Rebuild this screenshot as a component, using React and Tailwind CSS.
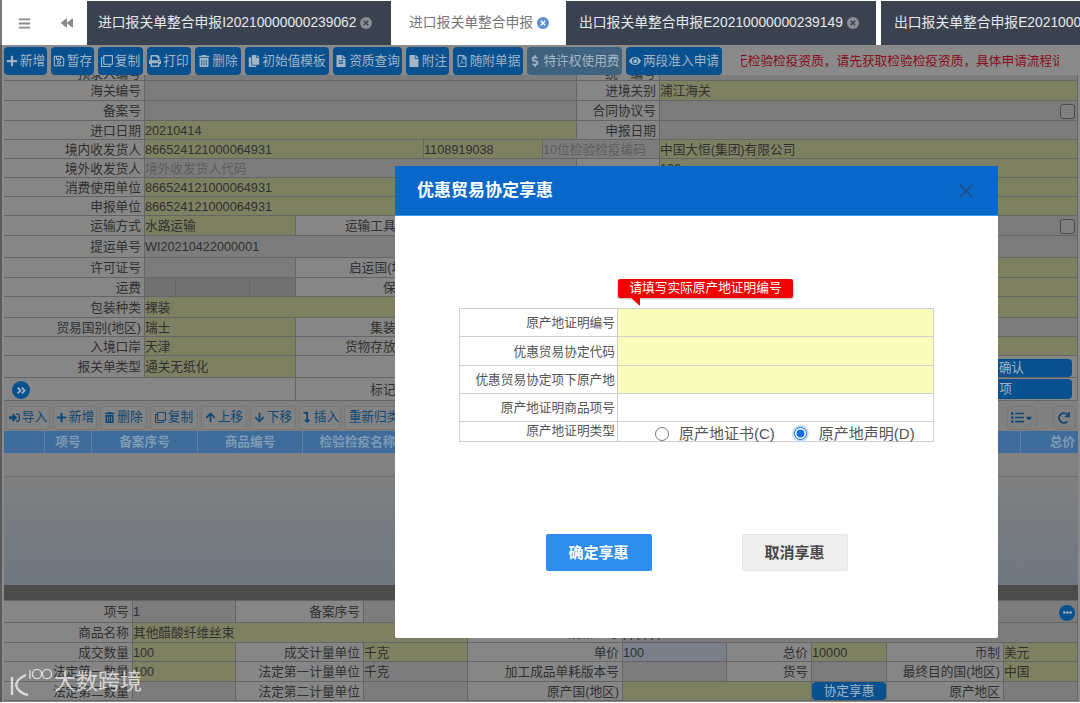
import {
  FaAngleDoubleRight, FaArrowDown, FaArrowUp, FaBackward, FaBars, FaCaretDown, FaCopy, FaDollarSign, FaEllipsisH, FaEye,
  FaFile, FaFileAlt, FaList, FaLevelDownAlt, FaPlus, FaPrint, FaRedo, FaRegClone, FaRegFilePdf, FaRegSave, FaSignInAlt, FaTrashAlt,
} from 'react-icons/fa'

const toolbar = [
  { label: '新增', Icon: FaPlus, width: 'w-[43px]' },
  { label: '暂存', Icon: FaRegSave, width: 'w-[43px]' },
  { label: '复制', Icon: FaRegClone, width: 'w-[45px]' },
  { label: '打印', Icon: FaPrint, width: 'w-[44px]' },
  { label: '删除', Icon: FaTrashAlt, width: 'w-[46px]' },
  { label: '初始值模板', Icon: FaCopy, width: 'w-[84px]' },
  { label: '资质查询', Icon: FaFileAlt, width: 'w-[69px]' },
  { label: '附注', Icon: FaFile, width: 'w-[43px]' },
  { label: '随附单据', Icon: FaRegFilePdf, width: 'w-[70px]' },
  { label: '特许权使用费', Icon: FaDollarSign, width: 'w-[95px]', muted: true },
  { label: '两段准入申请', Icon: FaEye, width: 'w-[96px]' },
]

const itemToolbar = [
  { label: '导入', Icon: FaSignInAlt, width: 'w-[44px]' },
  { label: '新增', Icon: FaPlus, width: 'w-[44px]' },
  { label: '删除', Icon: FaTrashAlt, width: 'w-[47px]' },
  { label: '复制', Icon: FaRegClone, width: 'w-[48px]' },
  { label: '上移', Icon: FaArrowUp, width: 'w-[46px]' },
  { label: '下移', Icon: FaArrowDown, width: 'w-[46px]' },
  { label: '插入', Icon: FaLevelDownAlt, width: 'w-[42px]' },
  { label: '重新归类', width: 'w-[60px]' },
]

const headColumns = [
  { label: '', width: 'w-[41px]' },
  { label: '项号', width: 'w-[47px]' },
  { label: '备案序号', width: 'w-[106px]' },
  { label: '商品编号', width: 'w-[105px]' },
  { label: '检验检疫名称', width: 'w-[110px]' },
]

const dialogRows = [
  { label: '原产地证明编号', height: 'h-[28px]', fill: true },
  { label: '优惠贸易协定代码', height: 'h-[29px]', fill: true },
  { label: '优惠贸易协定项下原产地', height: 'h-[28px]', fill: true },
  { label: '原产地证明商品项号', height: 'h-[28px]' },
]

function Cell({ tone = 'grey', width = 'flex-1', children, className = '' }) {
  const tones = {
    label: 'justify-end bg-[#868686] pr-[3px] text-[#303030]',
    grey: 'bg-[#7c7c7c] text-[#303030]',
    dark: 'bg-[#717171]',
    yellow: 'bg-[#7e8161] text-[#303030]',
    blue: 'bg-[#79808a] text-[#303030]',
  }
  return (
    <div className={`flex h-full min-w-0 items-center overflow-hidden whitespace-nowrap border-r border-[#656565] pt-[2px] ${tones[tone]} ${width} ${className}`}>
      {children}
    </div>
  )
}

function Row({ height, children }) {
  return <div className={`flex border-b border-[#656565] ${height}`}>{children}</div>
}

function TabClose({ active }) {
  return (
    <svg viewBox="0 0 12 12" className="h-[12px] w-[12px] shrink-0">
      <circle cx="6" cy="6" r="6" fill={active ? '#5c8fd2' : '#8a8d94'} />
      <path d="M3.8 3.8l4.4 4.4M8.2 3.8L3.8 8.2" stroke={active ? '#fff' : '#3a4250'} strokeWidth="1.5" />
    </svg>
  )
}

function Tab({ children, active, width }) {
  return (
    <div className={`flex h-full shrink-0 items-center gap-[4px] overflow-hidden whitespace-nowrap text-[13.8px] ${width} ${active ? 'bg-white text-[#777]' : 'bg-[#3a4250] text-[#e6e8ea]'}`}>
      {children}
    </div>
  )
}

function Checkbox() {
  return <span className="ml-auto mr-[2px] h-[15px] w-[15px] shrink-0 rounded-[3px] border border-[#4a4a4a] bg-[#808080]" />
}

function Watermark() {
  return (
    <div className="absolute left-[9px] top-[666px] flex items-center text-white/70">
      <svg viewBox="0 0 44 32" className="h-[32px] w-[44px]" fill="none" stroke="currentColor" strokeWidth="2.4">
        <path d="M3 11v18M17 9c-5 2-9 5-10 10 1 5 6 9 12 10" />
        <path d="M21 4v9" strokeWidth="1.4" />
        <circle cx="28" cy="8" r="4.6" strokeWidth="1.4" />
        <circle cx="38" cy="8" r="4.6" strokeWidth="1.4" />
      </svg>
      <span className="ml-[1px] text-[22px] leading-none">大数跨境</span>
    </div>
  )
}

function PreferenceDialog() {
  return (
    <div className="absolute left-[395px] top-[166px] flex h-[472px] w-[603px] flex-col rounded-[2px] bg-white">
      <div className="flex h-[50px] shrink-0 items-center justify-between border-b border-[#3f9df0] bg-[#0868c9] pl-[22px] pr-[25px]">
        <h2 className="text-[17px] font-bold text-white">优惠贸易协定享惠</h2>
        <svg viewBox="0 0 14 14" className="h-[14px] w-[14px]" fill="none" stroke="#1f4f80" strokeWidth="1.5">
          <path d="M1 1l12 12M13 1L1 13" />
        </svg>
      </div>

      <div className="relative mx-auto mt-[92px] w-[475px] border border-[#cfcfcf]">
        <div className="absolute left-[158px] top-[-30px] flex h-[19px] w-[175px] items-center justify-center rounded-[2px] bg-[#f40000] text-[12.7px] text-white shadow-[0_1px_2px_rgba(0,0,0,0.3)]">
          请填写实际原产地证明编号
          <span className="absolute left-0 top-[18px] h-0 w-0 border-l-[22px] border-t-[9px] border-l-transparent border-t-[#f40000] [clip-path:polygon(55%_0,100%_0,100%_100%)]" />
        </div>
        {dialogRows.map((row) => (
          <div key={row.label} className={`flex border-b border-[#cfcfcf] ${row.height}`}>
            <div className="flex w-[158px] items-center justify-end border-r border-[#cfcfcf] pr-[2px] pt-[2px] text-[12.7px] text-[#555]">{row.label}</div>
            <div className={`flex-1 ${row.fill ? 'bg-[#fbfdbb]' : 'bg-white'}`} />
          </div>
        ))}
        <div className="flex h-[19px]">
          <div className="flex w-[158px] items-center justify-end border-r border-[#cfcfcf] pr-[2px] text-[12.7px] text-[#555]">原产地证明类型</div>
          <div className="flex flex-1 items-center pl-[37px] pt-[4px] text-[15px] text-[#555]">
            <input type="radio" name="certType" className="h-[14px] w-[14px]" />
            <span className="ml-[10px] whitespace-nowrap">原产地证书(C)</span>
            <span className="ml-[17px] flex rounded-full bg-[#c4ddf9] p-[2px]">
              <input type="radio" name="certType" defaultChecked className="h-[13px] w-[13px] accent-[#0a6fe8]" />
            </span>
            <span className="ml-[10px] whitespace-nowrap">原产地声明(D)</span>
          </div>
        </div>
      </div>

      <div className="mt-[92px] flex justify-center gap-[90px]">
        <button className="h-[37px] w-[106px] rounded-[2px] bg-[#2f8ded] text-[15px] font-bold text-white">确定享惠</button>
        <button className="h-[37px] w-[106px] rounded-[2px] border border-[#e6e6e6] bg-[#efefef] text-[15px] font-bold text-[#484848]">取消享惠</button>
      </div>
    </div>
  )
}

export default function App() {
  return (
    <div className="relative h-[703px] w-[1080px] overflow-hidden bg-white font-['Liberation_Sans','Noto_Sans_CJK_SC',sans-serif] text-[12.7px] leading-none">
      <header className="flex h-[45px] items-stretch border-l-2 border-[#777] bg-white pt-px">
        <div className="flex w-[44px] items-center justify-center text-[#8a8a8a]">
          <FaBars size={13} />
        </div>
        <div className="flex w-[41px] items-center justify-center text-[#8a8a8a]">
          <FaBackward size={12} />
        </div>
        <Tab width="w-[304px] pl-[11px]">
          进口报关单整合申报I20210000000239062 <TabClose />
        </Tab>
        <Tab active width="w-[175px] pl-[18px]">
          进口报关单整合申报 <TabClose active />
        </Tab>
        <Tab width="w-[310px] pl-[13px]">
          出口报关单整合申报E20210000000239149 <TabClose />
        </Tab>
        <div className="w-[5px] shrink-0 bg-white" />
        <Tab width="w-[199px] pl-[13px]">出口报关单整合申报E20210000000239150</Tab>
      </header>

      <div className="h-[657px] border-l-2 border-[#5a5a5a] bg-[#8a8a8a] pl-[2px] pr-[2px]">
        <main className="w-[1074px]">
          <div className="flex h-[30px] items-center gap-[4px] pt-[2px]">
            {toolbar.map(({ label, Icon, width, muted }) => (
              <button key={label} className={`flex h-[28px] shrink-0 items-center justify-center gap-[2px] whitespace-nowrap rounded-[4px] text-[#a3b4c4] ${width} ${muted ? 'bg-[#3f627e]' : 'bg-[#09508f]'}`}>
                <Icon size={12} />
                {label}
              </button>
            ))}
            <div className="ml-[15px] flex w-[318px] justify-center overflow-hidden whitespace-nowrap text-[#8b0a19]">
              无检验检疫资质，请先获取检验检疫资质，具体申请流程请
            </div>
          </div>

          <Row height="h-[6px]">
            <Cell tone="label" width="w-[141px]" className="!items-end"><span className="mb-[-1px]">预录入编号</span></Cell>
            <Cell width="w-[432px]" />
            <Cell tone="label" width="w-[83px]" className="!items-end"><span className="mb-[-1px]">统一编号</span></Cell>
            <Cell />
          </Row>
          <Row height="h-[20px]">
            <Cell tone="label" width="w-[141px]">海关编号</Cell>
            <Cell width="w-[432px]" />
            <Cell tone="label" width="w-[83px]">进境关别</Cell>
            <Cell tone="yellow">浦江海关</Cell>
          </Row>
          <Row height="h-[20px]">
            <Cell tone="label" width="w-[141px]">备案号</Cell>
            <Cell width="w-[432px]" />
            <Cell tone="label" width="w-[83px]">合同协议号</Cell>
            <Cell><Checkbox /></Cell>
          </Row>
          <Row height="h-[19px]">
            <Cell tone="label" width="w-[141px]">进口日期</Cell>
            <Cell tone="yellow" width="w-[432px]">20210414</Cell>
            <Cell tone="label" width="w-[83px]">申报日期</Cell>
            <Cell />
          </Row>
          <Row height="h-[19px]">
            <Cell tone="label" width="w-[141px]">境内收发货人</Cell>
            <Cell tone="yellow" width="w-[279px]">866524121000064931</Cell>
            <Cell tone="yellow" width="w-[119px]">1108919038</Cell>
            <Cell tone="grey" width="w-[117px]"><span className="text-[#5c5c5c]">10位检验检疫编码</span></Cell>
            <Cell tone="yellow">中国大恒(集团)有限公司</Cell>
          </Row>
          <Row height="h-[19px]">
            <Cell tone="label" width="w-[141px]">境外收发货人</Cell>
            <Cell width="w-[432px]"><span className="text-[#5c5c5c]">境外收发货人代码</span></Cell>
            <Cell tone="label" width="w-[83px]" />
            <Cell tone="yellow">100</Cell>
          </Row>
          <Row height="h-[19px]">
            <Cell tone="label" width="w-[141px]">消费使用单位</Cell>
            <Cell tone="yellow" width="w-[432px]">866524121000064931</Cell>
            <Cell tone="label" width="w-[83px]" />
            <Cell tone="yellow" />
          </Row>
          <Row height="h-[19px]">
            <Cell tone="label" width="w-[141px]">申报单位</Cell>
            <Cell tone="yellow" width="w-[432px]">866524121000064931</Cell>
            <Cell tone="label" width="w-[83px]" />
            <Cell tone="yellow" />
          </Row>
          <Row height="h-[20px]">
            <Cell tone="label" width="w-[141px]">运输方式</Cell>
            <Cell tone="yellow" width="w-[151px]">水路运输</Cell>
            <Cell tone="label" width="w-[129px]">运输工具名称</Cell>
            <Cell width="w-[152px]" />
            <Cell tone="label" width="w-[83px]" />
            <Cell><Checkbox /></Cell>
          </Row>
          <Row height="h-[22px]">
            <Cell tone="label" width="w-[141px]">提运单号</Cell>
            <Cell width="w-[432px]">WI20210422000001</Cell>
            <Cell tone="label" width="w-[83px]" />
            <Cell />
          </Row>
          <Row height="h-[20px]">
            <Cell tone="label" width="w-[141px]">许可证号</Cell>
            <Cell width="w-[151px]" />
            <Cell tone="label" width="w-[129px]">启运国(地区)</Cell>
            <Cell width="w-[152px]" />
            <Cell tone="label" width="w-[83px]" />
            <Cell tone="yellow" />
          </Row>
          <Row height="h-[19px]">
            <Cell tone="label" width="w-[141px]">运费</Cell>
            <Cell tone="dark" width="w-[31px]" />
            <Cell tone="dark" width="w-[74px]" />
            <Cell tone="dark" width="w-[46px]" />
            <Cell tone="label" width="w-[129px]">保险费</Cell>
            <Cell width="w-[152px]" />
            <Cell tone="label" width="w-[83px]" />
            <Cell tone="yellow" />
          </Row>
          <Row height="h-[21px]">
            <Cell tone="label" width="w-[141px]">包装种类</Cell>
            <Cell tone="yellow" width="w-[432px]">裸装</Cell>
            <Cell tone="label" width="w-[83px]" />
            <Cell tone="yellow" />
          </Row>
          <Row height="h-[19px]">
            <Cell tone="label" width="w-[141px]">贸易国别(地区)</Cell>
            <Cell tone="yellow" width="w-[151px]">瑞士</Cell>
            <Cell tone="label" width="w-[129px]">集装箱号</Cell>
            <Cell width="w-[152px]" />
            <Cell tone="label" width="w-[83px]" />
            <Cell />
          </Row>
          <Row height="h-[19px]">
            <Cell tone="label" width="w-[141px]">入境口岸</Cell>
            <Cell tone="yellow" width="w-[151px]">天津</Cell>
            <Cell tone="label" width="w-[129px]">货物存放地点</Cell>
            <Cell width="w-[152px]" />
            <Cell tone="label" width="w-[83px]" />
            <Cell tone="yellow" />
          </Row>
          <Row height="h-[22px]">
            <Cell tone="label" width="w-[141px]">报关单类型</Cell>
            <Cell tone="yellow" width="w-[151px]">通关无纸化</Cell>
            <Cell tone="label" width="w-[129px]" />
            <Cell width="w-[152px]" />
            <Cell tone="label" className="!pr-[5px]">
              <button className="mt-[1px] flex h-[18px] w-[150px] items-center justify-end rounded-[4px] bg-[#09508f] pr-[48px] text-[#a3b4c4]">确认</button>
            </Cell>
          </Row>
          <Row height="h-[23px]">
            <Cell tone="label" width="w-[292px]" className="!justify-start !pl-[8px]">
              <span className="flex h-[18px] w-[18px] items-center justify-center rounded-full bg-[#09508f] text-[#a3b4c4]">
                <FaAngleDoubleRight size={11} />
              </span>
            </Cell>
            <Cell tone="label" width="w-[129px]">标记唛码</Cell>
            <Cell tone="label" width="w-[152px]" />
            <Cell tone="label" className="!pr-[5px] !pt-0">
              <button className="flex h-[20px] w-[150px] items-center justify-end rounded-[4px] bg-[#09508f] pr-[60px] text-[#a3b4c4]">项</button>
            </Cell>
          </Row>

          <div className="flex h-[30px] items-center gap-[3px] bg-[#808080] pl-[2px] pt-[3px]">
            {itemToolbar.map(({ label, Icon, width }) => (
              <button key={label} className={`flex h-[24px] shrink-0 items-center justify-center gap-[2px] whitespace-nowrap rounded-[4px] border border-[#767676] bg-[#838383] text-[#0e4875] ${width}`}>
                {Icon && <Icon size={11} />}
                {label}
              </button>
            ))}
            <button className="ml-auto flex h-[24px] w-[30px] items-center justify-center rounded-[4px] border border-[#767676] text-[#0e4875]">
              <FaList size={13} />
              <FaCaretDown size={10} />
            </button>
            <button className="ml-[13px] mr-[3px] flex h-[24px] w-[22px] items-center justify-center rounded-[4px] border border-[#767676] text-[#0e4875]">
              <FaRedo size={12} />
            </button>
          </div>

          <div className="flex h-[22px] bg-[#3d6c9a] font-bold text-[#7f9ab5]">
            {headColumns.map((column) => (
              <div key={column.label} className={`flex items-center justify-center border-r border-[#5f82a5] ${column.width}`}>{column.label}</div>
            ))}
            <div className="ml-auto flex w-[58px] items-center justify-end border-l border-[#5f82a5] pr-[3px]">总价</div>
          </div>
          <div className="h-[24px] border-b border-[#6e6e6e] bg-[#818181]" />
          <div className="h-[108px] bg-gradient-to-b from-[#7f7f7f] to-[#6e7782]" />
          <div className="h-[15px] bg-[#4b4b4b]" />

          <div className="h-px bg-[#656565]" />
          <Row height="h-[22px]">
            <Cell tone="label" width="w-[129px]">项号</Cell>
            <Cell width="w-[103px]">1</Cell>
            <Cell tone="label" width="w-[128px]">备案序号</Cell>
            <Cell className="justify-end pr-[2px]">
              <span className="ml-auto flex h-[16px] w-[16px] items-center justify-center rounded-full bg-[#09508f] text-[#a3b4c4]">
                <FaEllipsisH size={9} />
              </span>
            </Cell>
          </Row>
          <Row height="h-[20px]">
            <Cell tone="label" width="w-[129px]">商品名称</Cell>
            <Cell tone="yellow" width="w-[335px]">其他醋酸纤维丝束</Cell>
            <Cell tone="label" width="w-[155px]">规格型号</Cell>
            <Cell>| | | | | |</Cell>
          </Row>
          <Row height="h-[19px]">
            <Cell tone="label" width="w-[129px]">成交数量</Cell>
            <Cell tone="yellow" width="w-[103px]">100</Cell>
            <Cell tone="label" width="w-[128px]">成交计量单位</Cell>
            <Cell tone="yellow" width="w-[104px]">千克</Cell>
            <Cell tone="label" width="w-[155px]">单价</Cell>
            <Cell tone="blue" width="w-[104px]">100</Cell>
            <Cell tone="label" width="w-[85px]">总价</Cell>
            <Cell tone="yellow" width="w-[75px]">10000</Cell>
            <Cell tone="label" width="w-[117px]">币制</Cell>
            <Cell tone="yellow">美元</Cell>
          </Row>
          <Row height="h-[20px]">
            <Cell tone="label" width="w-[129px]">法定第一数量</Cell>
            <Cell tone="yellow" width="w-[103px]">100</Cell>
            <Cell tone="label" width="w-[128px]">法定第一计量单位</Cell>
            <Cell width="w-[104px]">千克</Cell>
            <Cell tone="label" width="w-[155px]">加工成品单耗版本号</Cell>
            <Cell width="w-[104px]" />
            <Cell tone="label" width="w-[85px]">货号</Cell>
            <Cell width="w-[75px]" />
            <Cell tone="label" width="w-[117px]">最终目的国(地区)</Cell>
            <Cell tone="yellow">中国</Cell>
          </Row>
          <Row height="h-[19px]">
            <Cell tone="label" width="w-[129px]">法定第二数量</Cell>
            <Cell width="w-[103px]" />
            <Cell tone="label" width="w-[128px]">法定第二计量单位</Cell>
            <Cell width="w-[104px]" />
            <Cell tone="label" width="w-[155px]">原产国(地区)</Cell>
            <Cell tone="yellow" width="w-[189px]" />
            <Cell tone="label" width="w-[75px]" className="!pr-0 !pt-0">
              <button className="h-[18px] w-full rounded-[4px] bg-[#09508f] text-[#a3b4c4]">协定享惠</button>
            </Cell>
            <Cell tone="label" width="w-[117px]">原产地区</Cell>
            <Cell />
          </Row>
        </main>
      </div>

      <PreferenceDialog />
      <Watermark />
    </div>
  )
}
